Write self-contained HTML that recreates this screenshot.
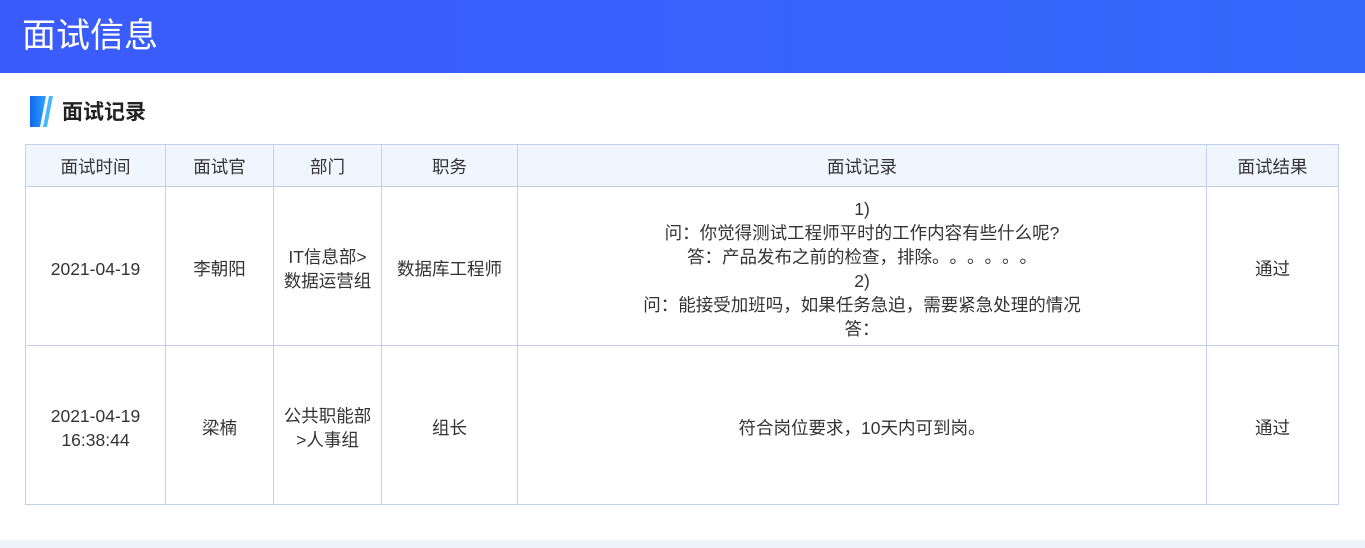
<!DOCTYPE html>
<html lang="zh-CN"><head><meta charset="utf-8"><style>
*{margin:0;padding:0;box-sizing:border-box}
body{width:1365px;height:548px;background:#fff;font-family:"Liberation Sans","Noto Sans CJK SC",sans-serif;position:relative;overflow:hidden;color:#333}
.top{height:73px;background:linear-gradient(90deg,#3a5bfb,#3468fd);color:#fff;font-size:34px;line-height:73px;padding-left:22px}
.sec{position:absolute;left:30px;top:95px;height:32px;display:flex;align-items:center}
.sec .ic{width:24px;height:31px;position:relative;margin-right:8px}
.sec b{font-size:21px;color:#222}
table{position:absolute;left:25px;top:144px;border-collapse:collapse;font-size:17.5px;table-layout:fixed;width:1313px}
td,th{border:1px solid #c3cfee;text-align:center;font-weight:normal;line-height:24px}
th{background:#eff6fe;height:42px;color:#333;padding-top:2px}
td{height:159px;padding-top:5px}
.p{display:inline-block;width:17.5px;text-align:left}
.bot{position:absolute;left:0;top:540px;width:1365px;height:8px;background:#eef2fb}
</style></head><body>
<div class="top">面试信息</div>
<div class="sec"><svg class="ic" viewBox="0 0 24 31"><defs><linearGradient id="g" x1="0" x2="1"><stop offset="0" stop-color="#1165f0"/><stop offset="1" stop-color="#2ea4ff"/></linearGradient></defs><polygon points="0,0 16,0 10,31 0,31" fill="url(#g)"/><polygon points="19,0 23,0 17,31 13,31" fill="#49b7ff"/></svg><b>面试记录</b></div>
<table>
<colgroup><col style="width:140px"><col style="width:108px"><col style="width:108px"><col style="width:136px"><col style="width:689px"><col style="width:132px"></colgroup>
<tr><th>面试时间</th><th>面试官</th><th>部门</th><th>职务</th><th>面试记录</th><th>面试结果</th></tr>
<tr><td>2021-04-19</td><td>李朝阳</td><td>IT信息部&gt;<br>数据运营组</td><td>数据库工程师</td><td>1)<br>问<span class="p">：</span>你觉得测试工程师平时的工作内容有些什么呢?<br>答<span class="p">：</span>产品发布之前的检查<span class="p">，</span>排除<span class="p">。</span><span class="p">。</span><span class="p">。</span><span class="p">。</span><span class="p">。</span><span class="p">。</span><br>2)<br>问<span class="p">：</span>能接受加班吗<span class="p">，</span>如果任务急迫<span class="p">，</span>需要紧急处理的情况<br>答<span class="p">：</span></td><td>通过</td></tr>
<tr><td>2021-04-19<br>16:38:44</td><td>梁楠</td><td>公共职能部<br>&gt;人事组</td><td>组长</td><td>符合岗位要求<span class="p">，</span>10天内可到岗<span class="p">。</span></td><td>通过</td></tr>
</table>
<div class="bot"></div>
</body></html>
